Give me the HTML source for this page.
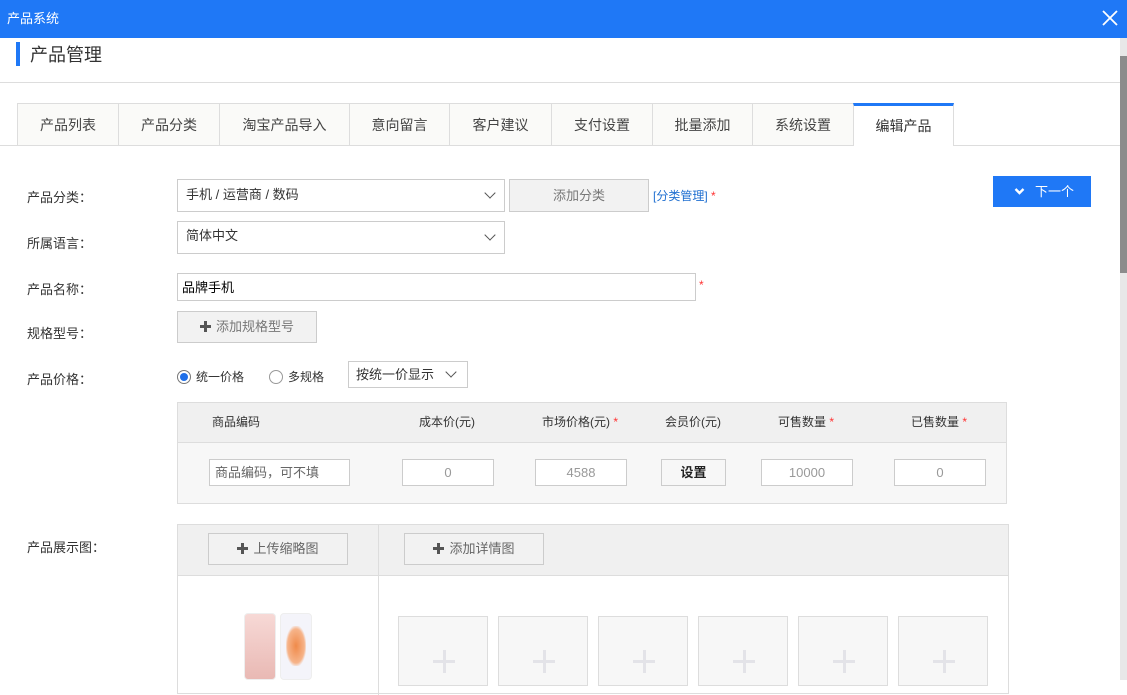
<!DOCTYPE html><html><head><meta charset="utf-8"><style>
*{margin:0;padding:0;box-sizing:border-box}
body{width:1127px;height:680px;overflow:hidden;position:relative;background:#fff;font-family:"Liberation Sans","Noto Sans CJK SC",sans-serif;font-size:13px;color:#333}
.a{position:absolute}
.tab{position:absolute;top:103px;height:43px;border:1px solid #ddd;border-right:none;background:#fafaf8;line-height:42px;text-align:center;font-size:14px;color:#444}
.lbl{position:absolute;left:27px;font-size:13px;color:#333}
.sel{position:absolute;border:1px solid #ccc;background:#fff;padding-left:8px;font-size:13px}
.chev{position:absolute;right:10px;top:9px;width:8px;height:8px;border-right:1px solid #555;border-bottom:1px solid #555;transform:rotate(45deg)}
.btn{position:absolute;border:1px solid #ccc;background:#f2f2f2;text-align:center;color:#777;font-size:13px}
.inp{position:absolute;border:1px solid #ccc;background:#fff;height:27px;line-height:25px;text-align:center;color:#999;font-size:13px}
.star{color:#f33}
.box{position:absolute;top:616px;width:90px;height:70px;border:1px solid #ddd;background:#f7f7f7}
.box:before{content:"";position:absolute;left:34px;top:43px;width:22px;height:3px;background:#e3e3e8}
.box:after{content:"";position:absolute;left:44px;top:33px;width:3px;height:23px;background:#e3e3e8}
.plus{display:inline-block;width:11px;height:11px;margin-right:5px;vertical-align:-1px;background:linear-gradient(#555,#555) center/11px 3px no-repeat,linear-gradient(#555,#555) center/3px 11px no-repeat}
</style></head><body>
<div class="a" style="left:0;top:0;width:1127px;height:38px;background:#1f78f6;color:#fff;font-size:13px;line-height:38px;padding-left:7px">产品系统</div>
<svg class="a" style="left:1101px;top:9px" width="18" height="18"><path d="M2 2L16 16M16 2L2 16" stroke="#fff" stroke-width="1.8"/></svg>
<div class="a" style="left:1120px;top:38px;width:7px;height:642px;background:#e8e8e8"></div>
<div class="a" style="left:1120px;top:56px;width:7px;height:217px;background:#8c8c8c"></div>
<div class="a" style="left:16px;top:42px;width:4px;height:24px;background:#1f78f6"></div>
<div class="a" style="left:30px;top:43px;font-size:18px;color:#333;line-height:24px">产品管理</div>
<div class="a" style="left:0;top:82px;width:1120px;height:1px;background:#ddd"></div>
<div class="a" style="left:0;top:145px;width:1120px;height:1px;background:#ddd"></div>
<div class="tab" style="left:17px;width:101px">产品列表</div>
<div class="tab" style="left:118px;width:101px">产品分类</div>
<div class="tab" style="left:219px;width:130px">淘宝产品导入</div>
<div class="tab" style="left:349px;width:100px">意向留言</div>
<div class="tab" style="left:449px;width:102px">客户建议</div>
<div class="tab" style="left:551px;width:101px">支付设置</div>
<div class="tab" style="left:652px;width:100px">批量添加</div>
<div class="tab" style="left:752px;width:101px">系统设置</div>
<div class="tab" style="left:853px;width:101px;background:#fff;border-top:3px solid #1f78f6;border-right:1px solid #ddd;border-bottom:none;line-height:40px;color:#333">编辑产品</div>

<div class="lbl" style="top:187px">产品分类：</div>
<div class="sel" style="left:177px;top:179px;width:328px;height:33px;line-height:30px">手机 / 运营商 / 数码<span class="chev"></span></div>
<div class="btn" style="left:509px;top:179px;width:140px;height:33px;line-height:31px">添加分类</div>
<div class="a" style="left:653px;top:187px;color:#1f6fd0;font-size:12px">[分类管理] <span class="star">*</span></div>
<div class="a" style="left:993px;top:176px;width:98px;height:31px;background:#1f78f6;color:#fff;line-height:31px;font-size:13px"><svg class="a" style="left:21px;top:11px" width="11" height="9"><path d="M1.5 2L5.5 6L9.5 2" stroke="#fff" stroke-width="2.4" fill="none"/></svg><span class="a" style="left:42px">下一个</span></div>

<div class="lbl" style="top:233px">所属语言：</div>
<div class="sel" style="left:177px;top:221px;width:328px;height:33px;line-height:28px">简体中文<span class="chev"></span></div>

<div class="lbl" style="top:279px">产品名称：</div>
<div class="sel" style="left:177px;top:273px;width:519px;height:28px;line-height:28px;padding-left:4px;color:#000">品牌手机</div>
<div class="a star" style="left:699px;top:278px;font-size:12px">*</div>

<div class="lbl" style="top:323px">规格型号：</div>
<div class="btn" style="left:177px;top:311px;width:140px;height:32px;line-height:30px"><span class="plus"></span>添加规格型号</div>

<div class="lbl" style="top:369px">产品价格：</div>
<div class="a" style="left:177px;top:370px;width:14px;height:14px;border:1px solid #777;border-radius:50%;background:#fff"><div class="a" style="left:2px;top:2px;width:8px;height:8px;border-radius:50%;background:#1f6fe8"></div></div>
<div class="a" style="left:196px;top:368px;font-size:12px">统一价格</div>
<div class="a" style="left:269px;top:370px;width:14px;height:14px;border:1px solid #999;border-radius:50%"></div>
<div class="a" style="left:288px;top:368px;font-size:12px">多规格</div>
<div class="sel" style="left:348px;top:361px;width:120px;height:27px;line-height:25px;padding-left:7px">按统一价显示<span class="chev" style="top:6px;right:12px"></span></div>

<div class="a" style="left:177px;top:402px;width:830px;height:102px;border:1px solid #ddd;background:#f7f7f7">
<div class="a" style="left:0;top:0;width:828px;height:40px;background:#f0f0f0;border-bottom:1px solid #ddd"></div>
</div>
<div class="a" style="left:212px;top:413px;font-size:12px">商品编码</div>
<div class="a" style="left:419px;top:413px;font-size:12px">成本价(元)</div>
<div class="a" style="left:542px;top:413px;font-size:12px">市场价格(元) <span class="star">*</span></div>
<div class="a" style="left:665px;top:413px;font-size:12px">会员价(元)</div>
<div class="a" style="left:778px;top:413px;font-size:12px">可售数量 <span class="star">*</span></div>
<div class="a" style="left:911px;top:413px;font-size:12px">已售数量 <span class="star">*</span></div>
<div class="inp" style="left:209px;top:459px;width:141px;text-align:left;padding-left:5px;color:#666">商品编码，可不填</div>
<div class="inp" style="left:402px;top:459px;width:92px">0</div>
<div class="inp" style="left:535px;top:459px;width:92px">4588</div>
<div class="inp" style="left:661px;top:459px;width:65px;background:#f7f7f7;color:#222;font-weight:bold">设置</div>
<div class="inp" style="left:761px;top:459px;width:92px">10000</div>
<div class="inp" style="left:894px;top:459px;width:92px">0</div>

<div class="lbl" style="top:537px">产品展示图：</div>
<div class="a" style="left:177px;top:524px;width:832px;height:170px;border:1px solid #ddd;background:#fff">
<div class="a" style="left:0;top:0;width:830px;height:51px;background:#f0f0f0;border-bottom:1px solid #ddd"></div>
<div class="a" style="left:200px;top:0;width:1px;height:170px;background:#ddd"></div>
</div>
<div class="btn" style="left:208px;top:533px;width:140px;height:32px;line-height:30px;color:#666"><span class="plus"></span>上传缩略图</div>
<div class="btn" style="left:404px;top:533px;width:140px;height:32px;line-height:30px;color:#666"><span class="plus"></span>添加详情图</div>
<div class="a" style="left:244px;top:613px;width:32px;height:67px;background:linear-gradient(#f7d9d6,#e9b9b4);border:1px solid #eee;border-radius:4px"></div>
<div class="a" style="left:280px;top:613px;width:32px;height:67px;background:#f4f4fa;border:1px solid #eee;border-radius:4px"><div class="a" style="left:5px;top:12px;width:20px;height:40px;background:radial-gradient(#f08a4a,#f6b48a 60%,#f4f4fa 75%)"></div></div>
<div class="box" style="left:398px"></div>
<div class="box" style="left:498px"></div>
<div class="box" style="left:598px"></div>
<div class="box" style="left:698px"></div>
<div class="box" style="left:798px"></div>
<div class="box" style="left:898px"></div>
</body></html>
